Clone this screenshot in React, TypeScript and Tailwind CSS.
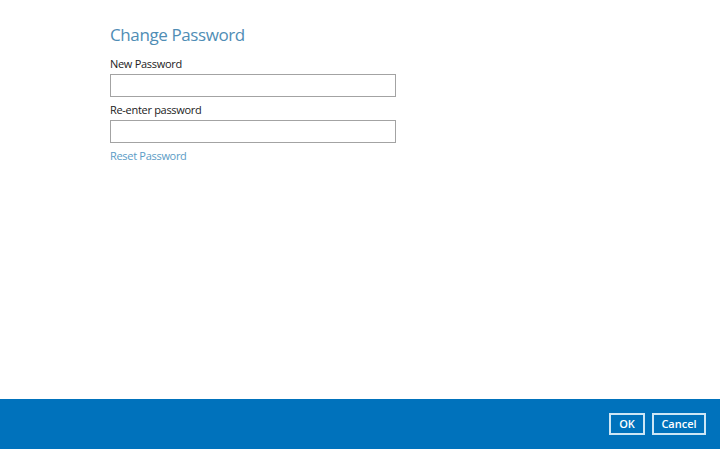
import React from 'react';

const App: React.FC = () => {
  return (
    <div
      className="flex h-[449px] w-[720px] flex-col bg-white"
      style={{ fontFamily: '"Open Sans", "Noto Sans", sans-serif' }}
    >
      <div className="flex-1 pl-[110px] pt-[22px]">
        <h1 className="text-[17px] leading-[26px] tracking-[-0.4px] text-[#4f8db5]">Change Password</h1>
        <div className="mt-[8px] w-[286px]">
          <label className="block text-[11px] leading-[16px] tracking-[-0.3px] text-[#222]">New Password</label>
          <input
            type="password"
            className="mt-[2px] block h-[23px] w-full border border-[#a3a3a3] bg-white outline-none"
          />
          <label className="mt-[5px] block text-[11px] leading-[16px] tracking-[-0.3px] text-[#222]">
            Re-enter password
          </label>
          <input
            type="password"
            className="mt-[2px] block h-[23px] w-full border border-[#a3a3a3] bg-white outline-none"
          />
          <a className="mt-[5px] block text-[11px] leading-[16px] tracking-[-0.3px] text-[#5b9cc6]">Reset Password</a>
        </div>
      </div>
      <div className="flex h-[50px] items-center justify-end gap-[7px] bg-[#0072bc] pr-[14px]">
        <button className="h-[22px] w-[36px] border-2 border-[#cde6f5] text-[11px] font-semibold text-white">
          OK
        </button>
        <button className="h-[22px] w-[54px] border-2 border-[#cde6f5] text-[11px] font-semibold text-white">
          Cancel
        </button>
      </div>
    </div>
  );
};

export default App;
